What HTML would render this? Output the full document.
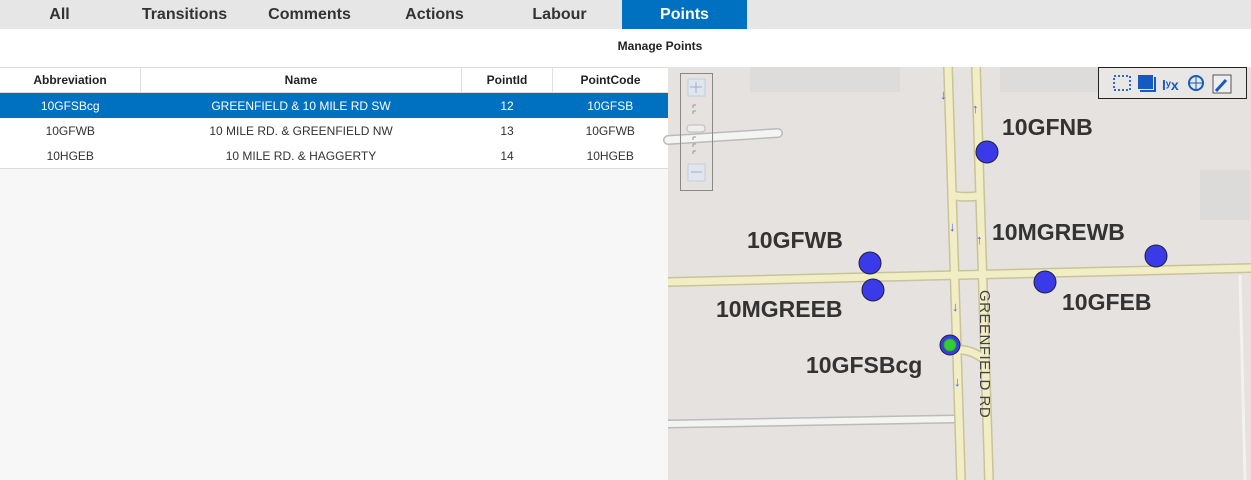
<!DOCTYPE html>
<html><head><style>
body{margin:0;width:1251px;height:480px;overflow:hidden;font-family:"Liberation Sans",Arial,sans-serif;background:#fff;position:relative}
.bar{position:absolute;left:0;top:0;width:1251px;height:29px;background:#e6e6e6}
.tab{position:absolute;top:0;height:29px;width:125px;line-height:29px;text-align:center;font-weight:bold;font-size:16px;color:#333}
.tab.on{background:#0070c0;color:#fff}
.title{position:absolute;top:39px;left:560px;width:200px;text-align:center;font-weight:bold;font-size:12px;color:#222}
.left{position:absolute;left:0;top:67px;width:668px;height:413px;background:#f7f7f7}
table{border-collapse:collapse;width:668px;font-size:12px;background:#fff}
th{height:24px;padding:0;font-weight:bold;border-right:1px solid #e0e0e0;border-bottom:1px solid #ddd;border-top:1px solid #ddd;color:#222}
td{height:25px;padding:0;text-align:center;color:#333}
tr.sel td{background:#0070c0;color:#fff}
tbody{border-bottom:1px solid #ddd}
</style></head><body>
<div class="bar"></div>
<div class="tab" style="left:-3px">All</div>
<div class="tab" style="left:122px">Transitions</div>
<div class="tab" style="left:247px">Comments</div>
<div class="tab" style="left:372px">Actions</div>
<div class="tab" style="left:497px">Labour</div>
<div class="tab on" style="left:622px">Points</div>
<div class="title">Manage Points</div>
<div class="left"><table>
<thead><tr><th style="width:140px">Abbreviation</th><th style="width:320px">Name</th><th style="width:90px">PointId</th><th style="border-right:none">PointCode</th></tr></thead>
<tbody>
<tr class="sel"><td>10GFSBcg</td><td>GREENFIELD &amp; 10 MILE RD SW</td><td>12</td><td>10GFSB</td></tr>
<tr><td>10GFWB</td><td>10 MILE RD. &amp; GREENFIELD NW</td><td>13</td><td>10GFWB</td></tr>
<tr><td>10HGEB</td><td>10 MILE RD. &amp; HAGGERTY</td><td>14</td><td>10HGEB</td></tr>
</tbody></table></div>
<svg style="position:absolute;left:0;top:0" width="1251" height="480">
<rect x="668" y="67" width="583" height="413" fill="#e5e2df"/>
<rect x="750" y="67" width="150" height="25" fill="#dedcda"/>
<rect x="1000" y="67" width="240" height="25" fill="#dedcda"/>
<rect x="1200" y="170" width="50" height="50" fill="#dddbd9"/>
<path d="M668 140 L778 133" stroke="#bbb" stroke-width="10" stroke-linecap="round"/>
<path d="M668 140 L778 133" stroke="#f4f4f2" stroke-width="7" stroke-linecap="round"/>
<path d="M668 424 L955 419" stroke="#bbb" stroke-width="9"/>
<path d="M668 424 L955 419" stroke="#f3f3f1" stroke-width="6"/>
<g stroke="#c9c39a" stroke-width="10" fill="none">
<path d="M948 67 L961 480"/><path d="M976 67 L989 480"/>
<path d="M668 282 L1251 268"/><path d="M952 195 Q962 198 978 196"/><path d="M955 350 Q970 348 985 360"/></g>
<g stroke="#f1edc4" stroke-width="7" fill="none">
<path d="M948 67 L961 480"/><path d="M976 67 L989 480"/>
<path d="M668 282 L1251 268"/><path d="M952 195 Q962 198 978 196"/><path d="M955 350 Q970 348 985 360"/></g>
<path d="M1240 275 L1245 480" stroke="#f2f2f0" stroke-width="3"/>
<g fill="#55f" font-size="13" font-family="Liberation Sans">
<text x="940" y="99">↓</text><text x="972" y="113">↑</text><text x="949" y="231">↓</text><text x="976" y="244">↑</text><text x="952" y="311">↓</text><text x="954" y="386">↓</text></g>
<text transform="translate(980,290) rotate(90)" font-size="15" fill="#444" letter-spacing="0.5">GREENFIELD RD</text>
<g fill="#3a3ae8" stroke="#223" stroke-width="1">
<circle cx="987" cy="152" r="11"/><circle cx="870" cy="263" r="11"/><circle cx="873" cy="290" r="11"/><circle cx="1045" cy="282" r="11"/><circle cx="1156" cy="256" r="11"/><circle cx="950" cy="345" r="10"/></g>
<circle cx="950" cy="345" r="6" fill="#3c3" stroke="#2a2" stroke-width="1"/>
<g style="font-weight:bold;font-size:23px;font-family:'Liberation Sans',sans-serif" fill="#333">
<text x="1002" y="135">10GFNB</text><text x="747" y="248">10GFWB</text><text x="992" y="240">10MGREWB</text>
<text x="716" y="317">10MGREEB</text><text x="1062" y="310">10GFEB</text><text x="806" y="373">10GFSBcg</text></g>
<rect x="680.5" y="73.5" width="32" height="117" fill="none" stroke="#888"/>
<rect x="688" y="79" width="17" height="17" fill="#dfe6ee" stroke="#c3cfdc"/>
<path d="M696 82 V93 M690 87 H702" stroke="#aac" stroke-width="1"/>
<path d="M693 105 h3 M693 111 h3 M693 137 h3 M693 144 h3 M693 151 h3 M693 105 v3 M693 111 v3 M693 137 v3 M693 144 v3 M693 151 v3" stroke="#999"/>
<rect x="687" y="125" width="18" height="7" rx="3" fill="#eee" stroke="#bbb"/>
<rect x="688" y="164" width="17" height="17" fill="#dfe6ee" stroke="#c3cfdc"/>
<path d="M691 172 H702" stroke="#aac"/>
<rect x="1098.5" y="67.5" width="148" height="31" fill="#e9e7e5" stroke="#222"/>
<rect x="1114" y="76" width="16" height="14" fill="none" stroke="#2a6ed0" stroke-width="2" stroke-dasharray="2 2"/>
<rect x="1138" y="75" width="15" height="14" fill="#1659c0"/><path d="M1140 91 H1155 V77" stroke="#1659c0" stroke-width="2" fill="none"/>
<text x="1162" y="90" font-size="14" font-weight="bold" fill="#1659c0">lʸx</text>
<circle cx="1196" cy="83" r="7" fill="none" stroke="#1659c0" stroke-width="2"/><path d="M1189 83 H1203 M1196 76 V90" stroke="#1659c0"/>
<rect x="1213" y="75" width="18" height="18" fill="#eee" stroke="#555"/><path d="M1216 91 L1226 80" stroke="#1659c0" stroke-width="3"/>
</svg>
</body></html>
